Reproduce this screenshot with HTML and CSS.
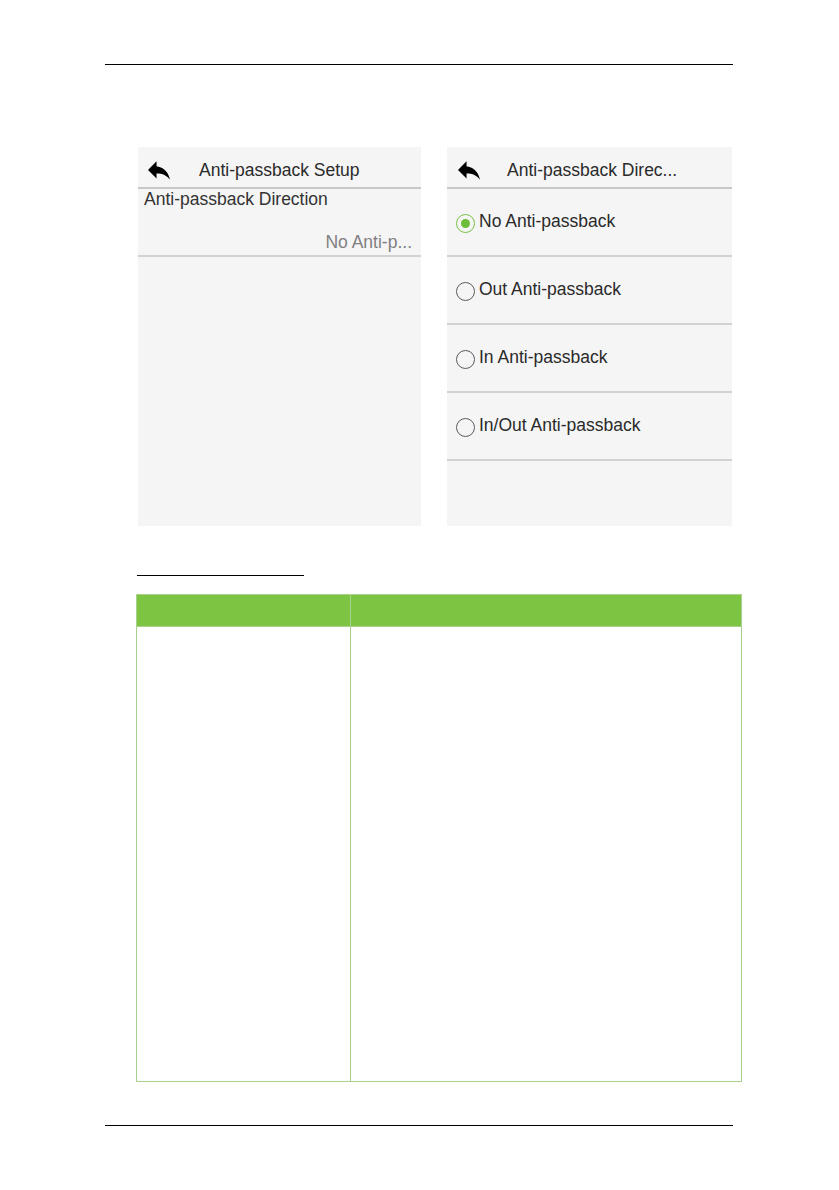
FILE: index.html
```html
<!DOCTYPE html>
<html lang="en">
<head>
    <meta charset="UTF-8">
    <meta name="viewport" content="width=device-width, initial-scale=1.0">
    <title>Anti-passback Setup</title>
    <link rel="stylesheet" href="styles.css">
</head>
<body>
<div class="page">
    <div class="top-rule"></div>

    <div class="screens">
        <!-- left screen: setup menu -->
        <div class="screen screen-left">
            <div class="screen-head">
                <svg class="back-icon" viewBox="3 5 18 15" width="22" height="19">
                    <path d="M10 9V5l-7 7 7 7v-4.1c5 0 8.5 1.6 11 5.1-1-5-4-10-11-11z" fill="#000"/>
                </svg>
                <span class="screen-title">Anti-passback Setup</span>
            </div>
            <div class="menu-row">
                <span class="menu-label">Anti-passback Direction</span>
                <span class="menu-value">No Anti-p...</span>
            </div>
        </div>

        <!-- right screen: direction options -->
        <div class="screen screen-right">
            <div class="screen-head">
                <svg class="back-icon" viewBox="3 5 18 15" width="22" height="19">
                    <path d="M10 9V5l-7 7 7 7v-4.1c5 0 8.5 1.6 11 5.1-1-5-4-10-11-11z" fill="#000"/>
                </svg>
                <span class="screen-title">Anti-passback Direc...</span>
            </div>
            <div class="option-row">
                <span class="radio checked"></span>
                <span class="option-text">No Anti-passback</span>
            </div>
            <div class="option-row">
                <span class="radio"></span>
                <span class="option-text">Out Anti-passback</span>
            </div>
            <div class="option-row">
                <span class="radio"></span>
                <span class="option-text">In Anti-passback</span>
            </div>
            <div class="option-row">
                <span class="radio"></span>
                <span class="option-text">In/Out Anti-passback</span>
            </div>
        </div>
    </div>

    <div class="section-title"></div>

    <table class="desc-table">
        <tr class="head-row">
            <th class="col-name"></th>
            <th class="col-desc"></th>
        </tr>
        <tr class="body-row">
            <td></td>
            <td></td>
        </tr>
    </table>

    <div class="bottom-rule"></div>
</div>
</body>
</html>
```

FILE: styles.css
```css
body {
    margin: 0;
    background-color: #fff;
    font-family: "Liberation Sans", Arial, sans-serif;
    color: #222;
}
.page {
    width: 628px;
    margin-left: 105px;
    padding-top: 64px;
}
.top-rule {
    border-top: 1px solid #000;
}
.screens {
    display: flex;
    gap: 26px;
    margin: 82px 0 0 33px;
}
.screen {
    height: 379px;
    background-color: #f5f5f5;
}
.screen-left {
    width: 283px;
}
.screen-right {
    width: 285px;
}
.screen-head {
    display: flex;
    align-items: center;
    box-sizing: border-box;
    height: 42px;
    padding-top: 6px;
    border-bottom: 2px solid #c8c8c8;
}
.back-icon {
    margin-left: 10px;
    flex-shrink: 0;
}
.screen-title {
    margin-left: 29px;
    font-size: 17.5px;
    color: #2a2a2a;
}
.screen-right .back-icon {
    margin-left: 11px;
}
.screen-right .screen-title {
    margin-left: 27px;
}
.menu-row {
    display: flex;
    flex-direction: column;
    justify-content: space-between;
    box-sizing: border-box;
    height: 68px;
    padding: 0 9px 3px 6px;
    border-bottom: 2px solid #d2d2d2;
    font-size: 17.5px;
    line-height: 20px;
}
.menu-label {
    color: #333;
}
.menu-value {
    text-align: right;
    color: #808080;
}
.option-row {
    display: flex;
    align-items: center;
    box-sizing: border-box;
    height: 68px;
    padding: 20px 0 0 9px;
    align-content: flex-start;
    flex-wrap: wrap;
    border-bottom: 2px solid #d2d2d2;
}
.radio {
    box-sizing: border-box;
    width: 19px;
    height: 19px;
    margin-top: 5px;
    margin-right: 4px;
    border: 1.5px solid #5a5a5a;
    border-radius: 50%;
    display: flex;
    align-items: center;
    justify-content: center;
}
.radio.checked {
    border-color: #7ac143;
}
.radio.checked::after {
    content: "";
    width: 9px;
    height: 9px;
    border-radius: 50%;
    background-color: #6cbd3a;
}
.option-text {
    font-size: 17.5px;
    line-height: 22px;
    color: #2a2a2a;
}
.section-title {
    width: 167px;
    height: 16px;
    margin: 33px 0 0 32px;
    border-bottom: 1px solid #000;
}
.desc-table {
    width: 606px;
    margin: 18px 0 0 31px;
    border-collapse: collapse;
}
.desc-table th,
.desc-table td {
    border: 1px solid #a9d18e;
    padding: 0;
}
.head-row {
    height: 32px;
    background-color: #7cc442;
}
.col-name {
    width: 213px;
}
.body-row {
    height: 455px;
}
.bottom-rule {
    margin-top: 43px;
    border-top: 1px solid #000;
}
```
